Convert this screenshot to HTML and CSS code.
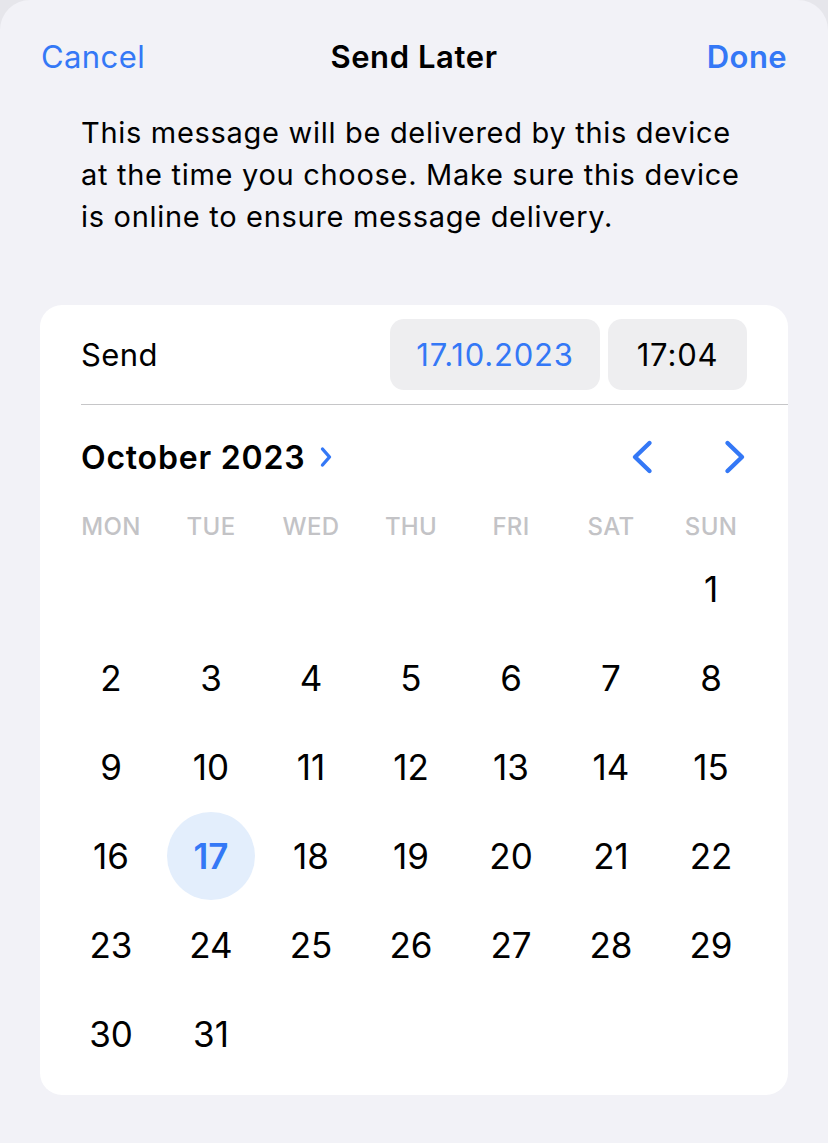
FILE: index.html
```html
<!DOCTYPE html>
<html lang="en">
<head>
    <meta charset="UTF-8">
    <meta name="viewport" content="width=device-width, initial-scale=1.0">
    <title>Send Later</title>
    <link rel="stylesheet" href="styles.css">
</head>
<body>
    <div class="sheet">
        <nav class="nav">
            <button class="nav-btn cancel">Cancel</button>
            <div class="nav-title">Send Later</div>
            <button class="nav-btn done">Done</button>
        </nav>
        <p class="note">This message will be delivered by this device at the time you choose. Make sure this device is online to ensure message delivery.</p>

        <div class="card">
            <div class="send-row">
                <span class="send-label">Send</span>
                <div class="pills">
                    <button class="pill date">17.10.2023</button>
                    <button class="pill time">17:04</button>
                </div>
            </div>
            <div class="divider"></div>

            <div class="month-row">
                <div class="month-title">
                    October 2023
                    <svg class="month-chev" width="14" height="22" viewBox="0 0 14 22">
                        <path d="M3.5 3 L10.5 11 L3.5 19" fill="none" stroke="currentColor" stroke-width="3.4" stroke-linecap="round" stroke-linejoin="round"/>
                    </svg>
                </div>
                <div class="month-nav">
                    <svg width="24" height="36" viewBox="0 0 24 36">
                        <path d="M19.5 4 L5 18 L19.5 32" fill="none" stroke="currentColor" stroke-width="4.4" stroke-linecap="round" stroke-linejoin="round"/>
                    </svg>
                    <svg width="24" height="36" viewBox="0 0 24 36">
                        <path d="M4.5 4 L19 18 L4.5 32" fill="none" stroke="currentColor" stroke-width="4.4" stroke-linecap="round" stroke-linejoin="round"/>
                    </svg>
                </div>
            </div>

            <div class="weekdays">
                <span>MON</span><span>TUE</span><span>WED</span><span>THU</span><span>FRI</span><span>SAT</span><span>SUN</span>
            </div>
            <div class="days" id="days"></div>
        </div>
    </div>

    <script>
        // October 2023 starts on a Sunday, so six blanks in a Monday-first week
        const grid = document.getElementById('days');
        const offset = 6;
        const total = 31;
        const selected = 17;

        for (let i = 0; i < offset; i++) {
            grid.appendChild(document.createElement('span'));
        }
        for (let d = 1; d <= total; d++) {
            const cell = document.createElement('span');
            cell.className = 'day';
            if (d === selected) cell.classList.add('selected');
            cell.textContent = d;
            grid.appendChild(cell);
        }
    </script>
</body>
</html>
```

FILE: styles.css
```css
body {
    margin: 0;
    background-color: #e6e6eb;
    font-family: Inter, "Noto Sans", sans-serif;
    color: #000;
}
.sheet {
    background-color: #f2f2f7;
    border-radius: 30px 30px 0 0;
    min-height: 1143px;
    overflow: hidden;
}
.nav {
    display: flex;
    align-items: center;
    justify-content: space-between;
    height: 112px;
    padding: 0 41px;
    position: relative;
}
.nav-btn {
    background: none;
    border: none;
    padding: 0;
    font-family: inherit;
    font-size: 31px;
    letter-spacing: 0.4px;
    color: #3478f6;
    cursor: pointer;
}
.nav-btn.done {
    font-weight: 600;
}
.nav-title {
    position: absolute;
    left: 0;
    right: 0;
    text-align: center;
    font-size: 31px;
    letter-spacing: 0.6px;
    font-weight: 600;
    pointer-events: none;
}
.note {
    margin: 0;
    padding: 0 82px 0 81px;
    font-size: 29px;
    line-height: 42px;
    letter-spacing: 0.7px;
}
.card {
    background: #fff;
    margin: 67px 40px 0;
    border-radius: 22px;
    padding-bottom: 17px;
}
.send-row {
    display: flex;
    align-items: center;
    justify-content: space-between;
    height: 99px;
    padding: 0 41px;
}
.send-label {
    font-size: 31px;
    letter-spacing: 0.4px;
}
.pills {
    display: flex;
    gap: 8px;
}
.pill {
    height: 71px;
    border: none;
    border-radius: 14px;
    background-color: #eeeef0;
    font-family: inherit;
    font-size: 31px;
    letter-spacing: 0.8px;
    padding: 0;
    color: #000;
}
.pill.date {
    width: 210px;
    color: #3478f6;
}
.pill.time {
    width: 139px;
}
.divider {
    height: 1px;
    margin-left: 41px;
    background-color: #c6c6c8;
}
.month-row {
    display: flex;
    align-items: center;
    justify-content: space-between;
    height: 104px;
    padding: 0 41px;
}
.month-title {
    display: flex;
    align-items: center;
    gap: 14px;
    font-size: 32px;
    letter-spacing: 0.8px;
    font-weight: 600;
}
.month-chev {
    color: #3478f6;
}
.month-nav {
    display: flex;
    gap: 69px;
    color: #3478f6;
}
.weekdays,
.days {
    display: grid;
    grid-template-columns: repeat(7, 100px);
    padding: 0 21px;
    text-align: center;
}
.weekdays {
    height: 35px;
    align-items: center;
    font-size: 24px;
    font-weight: 500;
    letter-spacing: 0.3px;
    color: #c3c3c6;
}
.days {
    grid-auto-rows: 89px;
}
.day {
    display: flex;
    align-items: center;
    justify-content: center;
    font-size: 35px;
}
.day.selected {
    position: relative;
    z-index: 0;
    color: #3478f6;
    font-weight: 600;
}
.day.selected::before {
    content: "";
    position: absolute;
    width: 88px;
    height: 88px;
    border-radius: 50%;
    background-color: #e3eefc;
    z-index: -1;
}
```
